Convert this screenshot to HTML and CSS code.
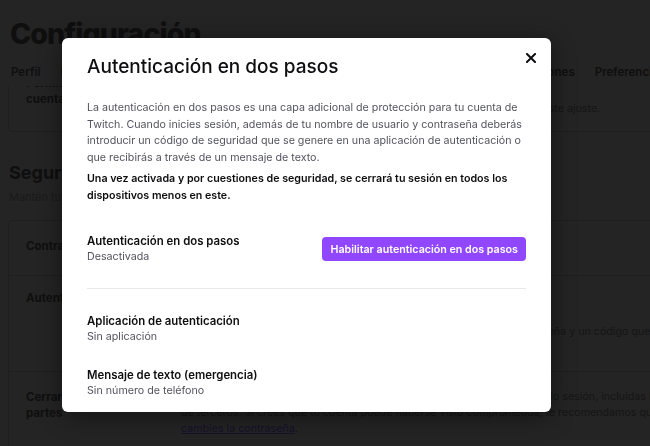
FILE: index.html
```html
<!DOCTYPE html>
<html lang="es">

<head>
    <meta charset="UTF-8">
    <meta name="viewport" content="width=device-width, initial-scale=1.0">
    <title>Configuración - Seguridad y privacidad</title>
    <link rel="stylesheet" href="styles.css">
</head>

<body>
    <!-- Página de ajustes (queda detrás del modal) -->
    <div class="page">
        <header class="page-header">
            <h1 class="page-title">Configuración</h1>
            <nav class="tabs">
                <span class="tab">Perfil</span>
                <span class="tab">Prime Gaming</span>
                <span class="tab">Canal y vídeos</span>
                <span class="tab">Seguridad y privacidad</span>
                <span class="tab">Notificaciones</span>
                <span class="tab">Conexiones</span>
                <span class="tab">Preferencias</span>
            </nav>
        </header>

        <div class="scroll">
            <div class="card card-first">
                <div class="card-row">
                    <div class="row-label">Permitir acceso a la<br>cuenta</div>
                    <div class="row-text">Si tienes algún problema, soporte podrá ayudarte.<br>
                        El equipo de soporte podrá ver datos de tu cuenta mientras mantengas este ajuste.</div>
                </div>
            </div>

            <h2 class="section-title">Seguridad</h2>
            <p class="section-desc">Mantén tu cuenta segura y protegida</p>

            <div class="card">
                <div class="card-row">
                    <div class="row-label">Contraseña</div>
                    <div class="row-text"><a href="#">Cambiar contraseña</a></div>
                </div>
                <div class="card-row card-row-tall">
                    <div class="row-label">Autenticación en dos pasos</div>
                    <div class="row-text">Configurar autenticación en dos pasos<br>
                        Añade una capa de seguridad adicional a tu cuenta de Twitch.<br>
                        Al iniciar sesión, además de tu nombre, tendrás que introducir tu contraseña y un código que</div>
                </div>
                <div class="card-row">
                    <div class="row-label">Cerrar sesión en todas<br>partes</div>
                    <div class="row-text">Se cerrará tu sesión en todos los dispositivos en los que tengas ya iniciado sesión, incluidas las aplicaciones<br>
                        de terceros. Si crees que tu cuenta puede haberse visto comprometida, te recomendamos que<br>
                        <a href="#">cambies la contraseña</a>.</div>
                </div>
            </div>
        </div>
    </div>

    <!-- Modal -->
    <div class="overlay">
        <div class="modal">
            <button class="modal-close" aria-label="Cerrar">
                <svg width="10" height="10" viewBox="0 0 10 10">
                    <path d="M1 1 L9 9 M9 1 L1 9" stroke="#0e0e10" stroke-width="2" stroke-linecap="square" fill="none" />
                </svg>
            </button>
            <h2 class="modal-title">Autenticación en dos pasos</h2>
            <p class="modal-text">La autenticación en dos pasos es una capa adicional de protección para tu cuenta de Twitch. Cuando inicies sesión, además de tu nombre de usuario y contraseña deberás introducir un código de seguridad que se genere en una aplicación de autenticación o que recibirás a través de un mensaje de texto.</p>
            <p class="modal-text modal-text-strong">Una vez activada y por cuestiones de seguridad, se cerrará tu sesión en todos los dispositivos menos en este.</p>

            <div class="option">
                <div class="option-info">
                    <div class="option-name">Autenticación en dos pasos</div>
                    <div class="option-state">Desactivada</div>
                </div>
                <button class="btn-primary">Habilitar autenticación en dos pasos</button>
            </div>

            <hr class="divider">

            <div class="option">
                <div class="option-info">
                    <div class="option-name">Aplicación de autenticación</div>
                    <div class="option-state">Sin aplicación</div>
                </div>
            </div>

            <div class="option">
                <div class="option-info">
                    <div class="option-name">Mensaje de texto (emergencia)</div>
                    <div class="option-state">Sin número de teléfono</div>
                </div>
            </div>
        </div>
    </div>
</body>

</html>
```

FILE: styles.css
```css
body {
    margin: 0;
    font-family: Inter, "Noto Sans", Arial, sans-serif;
    background-color: #242424;
    color: #0f0f0f;
    overflow: hidden;
    height: 446px;
}

/* ---------- página de fondo (oscurecida) ---------- */

.page {
    padding: 0 0 0 8px;
}

.page-header {
    background-color: #242424;
    position: relative;
    z-index: 1;
}

.page-title {
    margin: 0;
    padding: 16px 0 0 2px;
    font-size: 28.5px;
    font-weight: 800;
    line-height: 36px;
    letter-spacing: -0.9px;
}

.tabs {
    display: flex;
    gap: 20px;
    padding: 12px 0 0 3px;
    height: 22px;
    white-space: nowrap;
    font-size: 11.5px;
    font-weight: 600;
    line-height: 16px;
}

.scroll {
    height: 400px;
}

.card {
    border: 1px solid #1f1f1f;
    border-radius: 4px;
    margin-right: -300px;
}

.card-first {
    margin-top: -29px;
}

.card-row {
    display: flex;
    padding: 17px 0 21px 17px;
    border-top: 1px solid #1f1f1f;
    font-size: 10.7px;
    line-height: 16px;
}

.card-row:first-child {
    border-top: none;
}

.card-first .card-row {
    padding-bottom: 14px;
}

.card-row-tall {
    padding-top: 14px;
    padding-bottom: 30px;
}

.card-row-tall .row-text {
    padding-top: 1px;
    line-height: 16.5px;
}

.row-label {
    width: 155px;
    flex-shrink: 0;
    font-weight: 700;
    font-size: 11.5px;
    white-space: nowrap;
}

.row-text {
    white-space: nowrap;
    color: #151515;
}

.card-first .row-text {
    padding-top: 10px;
}

.row-text a {
    color: #16102a;
}

.section-title {
    margin: 29px 0 0 1px;
    font-size: 18px;
    font-weight: 700;
    line-height: 24px;
}

.section-desc {
    margin: 4px 0 15px 1px;
    font-size: 11px;
    line-height: 16px;
    color: #1a1a1a;
}

/* ---------- modal ---------- */

.overlay {
    position: fixed;
    top: 0;
    left: 0;
    right: 0;
    bottom: 0;
    z-index: 10;
    padding: 38px 0 0 62px;
}

.modal {
    position: relative;
    width: 439px;
    padding: 17px 25px 14px 25px;
    background-color: #fff;
    border-radius: 6px;
    box-shadow: 0 4px 24px rgba(0, 0, 0, 0.45);
}

.modal-close {
    position: absolute;
    top: 14px;
    right: 14px;
    display: flex;
    align-items: center;
    justify-content: center;
    width: 12px;
    height: 12px;
    padding: 0;
    border: none;
    background: none;
    cursor: pointer;
}

.modal-title {
    margin: 0;
    font-size: 19px;
    font-weight: 500;
    line-height: 24px;
    color: #0e0e10;
}

.modal-text {
    margin: 21px 0 0;
    font-size: 10.7px;
    line-height: 16.5px;
    color: #53535f;
}

.modal-text-strong {
    margin-top: 4px;
    font-weight: 600;
    color: #0e0e10;
    line-height: 17px;
}

.option {
    display: flex;
    align-items: center;
    justify-content: space-between;
    margin-top: 24px;
}

.modal-text-strong + .option {
    margin-top: 30px;
}

.option-name {
    font-size: 11.4px;
    font-weight: 600;
    line-height: 15px;
    color: #0e0e10;
}

.option-state {
    font-size: 10.7px;
    line-height: 15px;
    color: #53535f;
}

.btn-primary {
    height: 24px;
    padding: 0 8px;
    border: none;
    border-radius: 4px;
    background-color: #9147ff;
    color: #fff;
    font-family: inherit;
    font-size: 10.7px;
    font-weight: 600;
    cursor: pointer;
}

.divider {
    margin: 24px 0 0;
    border: none;
    border-top: 1px solid #e9e9ec;
}

.divider + .option {
    margin-top: 25px;
}
```
